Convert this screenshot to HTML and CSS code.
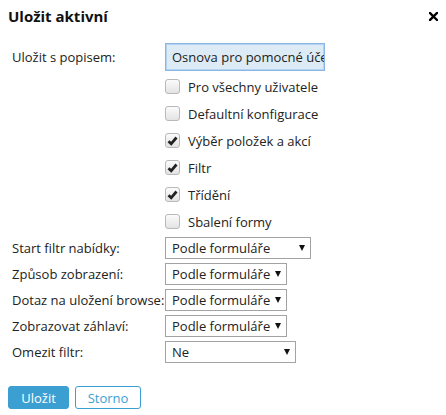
FILE: index.html
```html
<!DOCTYPE html>
<html lang="cs">
<head>
<meta charset="utf-8">
<title>Uložit aktivní</title>
<link rel="stylesheet" href="styles.css">
</head>
<body>
<div class="dialog">
  <div class="header">
    <h1 class="title">Uložit aktivní</h1>
    <button class="close" type="button" aria-label="Zavřít">
      <svg width="9" height="9" viewBox="0 0 9 9"><path d="M1 1 L8 8 M8 1 L1 8" stroke="#000" stroke-width="2.4" stroke-linecap="square"/></svg>
    </button>
  </div>
  <div class="form">
    <div class="row row-input">
      <label class="label">Uložit s popisem:</label>
      <input class="text" type="text" value="Osnova pro pomocné účetnictví">
    </div>
    <div class="checks">
      <label class="check"><span class="box"></span>Pro všechny uživatele</label>
      <label class="check"><span class="box"></span>Defaultní konfigurace</label>
      <label class="check"><span class="box on"><svg width="11" height="10" viewBox="0 0 11 10"><path d="M1.5 5.2 L4.2 7.8 L9.5 1.5" fill="none" stroke="#222" stroke-width="2.8"/></svg></span>Výběr položek a akcí</label>
      <label class="check"><span class="box on"><svg width="11" height="10" viewBox="0 0 11 10"><path d="M1.5 5.2 L4.2 7.8 L9.5 1.5" fill="none" stroke="#222" stroke-width="2.8"/></svg></span>Filtr</label>
      <label class="check"><span class="box on"><svg width="11" height="10" viewBox="0 0 11 10"><path d="M1.5 5.2 L4.2 7.8 L9.5 1.5" fill="none" stroke="#222" stroke-width="2.8"/></svg></span>Třídění</label>
      <label class="check"><span class="box"></span>Sbalení formy</label>
    </div>
    <div class="selects">
      <div class="row">
        <label class="label">Start filtr nabídky:</label>
        <span class="sel w145"><select><option>Podle formuláře</option></select><i class="arrow"></i></span>
      </div>
      <div class="row">
        <label class="label">Způsob zobrazení:</label>
        <span class="sel w122"><select><option>Podle formuláře</option></select><i class="arrow"></i></span>
      </div>
      <div class="row">
        <label class="label">Dotaz na uložení browse:</label>
        <span class="sel w122"><select><option>Podle formuláře</option></select><i class="arrow"></i></span>
      </div>
      <div class="row">
        <label class="label">Zobrazovat záhlaví:</label>
        <span class="sel w122"><select><option>Podle formuláře</option></select><i class="arrow"></i></span>
      </div>
      <div class="row">
        <label class="label">Omezit filtr:</label>
        <span class="sel w131"><select><option>Ne</option></select><i class="arrow"></i></span>
      </div>
    </div>
  </div>
  <div class="buttons">
    <button class="btn primary" type="button">Uložit</button>
    <button class="btn secondary" type="button">Storno</button>
  </div>
</div>
</body>
</html>
```

FILE: styles.css
```css
* { box-sizing: border-box; }
body {
  margin: 0;
  background: #fff;
  font-family: "Open Sans", "Noto Sans", sans-serif;
  font-size: 13px;
  color: #222;
}
.dialog {
  padding: 8px 8px 0 8px;
  width: 446px;
}
.header {
  display: flex;
  justify-content: space-between;
  align-items: center;
  height: 16px;
}
.title {
  margin: 0;
  font-size: 15px;
  font-weight: 700;
  color: #111;
  line-height: 16px;
}
.close {
  border: 0;
  background: none;
  padding: 0;
  width: 9px;
  height: 9px;
  display: flex;
}
.form {
  margin-top: 19px;
  padding-left: 4px;
}
.row {
  display: flex;
  align-items: center;
}
.label {
  width: 153px;
  flex: none;
  white-space: nowrap;
}
.row-input { height: 28px; }
.text {
  width: 160px;
  height: 28px;
  border: 1px solid #8ab6e6;
  box-shadow: inset 0 0 0 1px #b5d3f0;
  background: #dcebf6;
  font-family: inherit;
  font-size: 13px;
  color: #222;
  padding: 0 0 0 6px;
  outline: none;
}
.checks {
  margin-top: 2px;
  padding-left: 153px;
}
.check {
  display: flex;
  align-items: center;
  height: 27px;
}
.box {
  width: 15px;
  height: 15px;
  border: 1px solid #b9b9b9;
  border-radius: 3px;
  background: linear-gradient(#fbfbfb, #e3e3e3);
  margin-right: 8px;
  display: flex;
  align-items: center;
  justify-content: center;
}
.selects {
  margin-top: 2px;
  display: flex;
  flex-direction: column;
  gap: 4px;
}
.sel {
  position: relative;
  display: block;
  height: 22px;
}
.sel select {
  appearance: none;
  -webkit-appearance: none;
  width: 100%;
  height: 22px;
  border: 1px solid #a3a3a3;
  border-radius: 0;
  background: #fff;
  font-family: inherit;
  font-size: 13px;
  color: #222;
  padding: 0 0 0 6px;
}
.sel .arrow {
  position: absolute;
  right: 6px;
  top: 8px;
  width: 0;
  height: 0;
  border-left: 3.5px solid transparent;
  border-right: 3.5px solid transparent;
  border-top: 6px solid #111;
  pointer-events: none;
}
.w145 { width: 146px; }
.w122 { width: 122px; }
.w131 { width: 131px; }
.buttons {
  display: flex;
  gap: 6px;
  margin-top: 23px;
}
.btn {
  height: 23px;
  border-radius: 3px;
  font-family: inherit;
  font-size: 13px;
  padding: 0;
}
.primary {
  width: 61px;
  background: #3b9fd2;
  border: 1px solid #3b9fd2;
  color: #fff;
}
.secondary {
  width: 66px;
  background: #fff;
  border: 1px solid #3b9fd2;
  color: #3b9fd2;
}
```
